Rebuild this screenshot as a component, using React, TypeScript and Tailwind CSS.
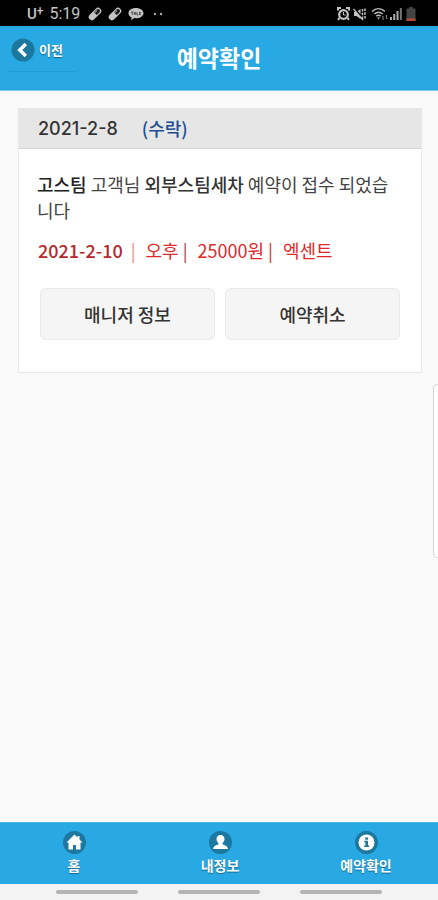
import type { ReactNode } from 'react'

type Tab = {
  label: string
  href: string
  icon: ReactNode
}

const tabs: Tab[] = [
  {
    label: '홈',
    href: '#home',
    icon: <path d="M11.500 3.500 3.500 11.500h2v7H10V14h3v4.500h4.500v-7h2l-3-3v-3.500h-2v1.500z" />,
  },
  {
    label: '내정보',
    href: '#me',
    icon: <path d="M11.500 4c-2.600 0-4 1.700-4 4.100 0 1.700.8 3.200 1.900 4v1.500c-2.500.7-5.100 1.700-5.400 4.400h15c-.3-2.700-2.900-3.700-5.400-4.400v-1.500c1.100-.8 1.900-2.300 1.900-4 0-2.400-1.400-4.100-4-4.100z" />,
  },
  {
    label: '예약확인',
    href: '#reservation',
    icon: (
      <>
        <circle cx="11.500" cy="11.500" r="8" />
        <path fill="#1c789f" d="M10.200 6.500h2.800v2.200h-2.800zM9.200 9.700H13v4.800h1.200V16H9.200v-1.500h1.200v-3.300H9.200z" />
      </>
    ),
  },
]

function Pill() {
  return (
    <svg viewBox="0 0 14 14" className="size-3.5">
      <g transform="rotate(-45 7 7)">
        <rect x="-.5" y="3.800" width="15" height="6.400" rx="3.200" fill="#c4c4c4" />
        <path d="M7.500 5h3.700a2 2 0 0 1 0 4H7.500z" fill="#1a1a1a" />
        <path d="M7.500 6h3.500" stroke="#999" strokeWidth="1" />
      </g>
    </svg>
  )
}

function StatusBar() {
  return (
    <div className="flex h-[26px] items-center justify-between bg-black pt-px pr-[22px] pl-[27px] font-['Roboto',sans-serif] text-[#c4c4c4]">
      <div className="flex items-center gap-1.5">
        <span className="flex items-center text-[15px] leading-4 font-medium">
          U<sup className="top-0 -mt-1.5 text-xs leading-3">+</sup>
        </span>
        <span className="mr-0.5 text-base leading-5">5:19</span>
        <Pill />
        <Pill />
        <svg viewBox="0 0 16 14" className="h-3.5 w-4" fill="#c4c4c4">
          <path d="M8 1C3.600 1 .5 3.200.5 6.200c0 2 1.200 3.500 3.200 4.400L3 13.200l3.300-2.100c.5.100 1.100.100 1.700.1 4.400 0 7.500-2.100 7.500-5S12.400 1 8 1z" />
          <path d="M3 5h2.500M4.200 5v3M6 8l1-3 1 3M9 5v3h1.200M11.500 4.800V8M13.200 5l-1.500 1.500L13.300 8" stroke="#333" strokeWidth=".8" fill="none" />
        </svg>
        <svg viewBox="0 0 12 4" className="ml-0.5 h-1 w-3" fill="#aaa">
          <circle cx="3" cy="2" r="1.200" />
          <circle cx="9" cy="2" r="1.200" />
        </svg>
      </div>
      <div className="flex items-center gap-[3px]">
        <svg viewBox="0 0 13 14" className="h-3.5 w-[13px]" fill="none" stroke="#c4c4c4">
          <path d="M1 3.500V1h3M9 1h3v2.500M2.500 11 1 12.800M10.500 11l1.500 1.800" strokeWidth="2" />
          <circle cx="6.500" cy="7.500" r="4.300" strokeWidth="2.200" />
          <path d="M6.500 5v3h2" />
        </svg>
        <svg viewBox="0 0 13 14" className="h-3.5 w-[13px]" fill="none" stroke="#c4c4c4">
          <path d="M1 5v4h2.500L7.500 12V2L3.500 5z" fill="#c4c4c4" stroke="none" />
          <path d="m1 1 10 12" stroke="#000" strokeWidth="2" />
          <path d="m.500 2 9.500 11" strokeWidth="1.200" />
          <path d="M9.500 2v10M12 1.500v11" strokeDasharray="2.500 1.200" strokeWidth="1.500" />
        </svg>
        <svg viewBox="0 0 17 14" className="ml-0.5 h-3.5 w-[17px]" fill="none" stroke="#bbb" strokeWidth="1.500">
          <path d="M1 4.500c4-3.600 9-3.600 13 0M3.300 7c2.600-2.200 5.800-2.200 8.400 0M5.300 9.200c1.300-1 3.100-1 4.400 0" />
          <path d="M6 10.500h3l-1.500 2z" fill="#bbb" stroke="none" />
          <path d="M12 9v4M15.500 8v4" stroke="#777" strokeWidth="1.200" />
        </svg>
        <svg viewBox="0 0 12 13" className="-ml-px h-[13px] w-3" fill="#aaa">
          <path d="M0 10h2v3H0zM3.200 7h2v6h-2zM6.500 4h2v9h-2z" />
          <path d="M9.800 1h2v12h-2z" fill="#777" />
        </svg>
        <svg viewBox="0 0 10 14" className="ml-px h-3.5 w-2.5">
          <path d="M3 0h4v1.500h2.500V14H.5V1.500H3z" fill="#444" />
          <path d="M.5 11.500h9V14h-9z" fill="#b64a35" />
        </svg>
      </div>
    </div>
  )
}

function Header() {
  return (
    <header className="grid h-[65px] grid-cols-[1fr_auto_1fr] items-start border-b border-[#7fc6ea] bg-[#29a9e3] px-[7px] pt-2 text-white">
      <button
        type="button"
        className="flex h-[38px] w-[72px] items-center gap-1 rounded-sm border-b border-[#239bd3] pb-1.5 pl-1 text-[13px] leading-5 font-bold whitespace-nowrap [text-shadow:0_1px_1px_#15668d]"
      >
        <svg viewBox="0 0 24 24" className="size-6 shrink-0">
          <circle cx="12" cy="12" r="11.500" fill="#1c789f" />
          <path d="m14.800 6-6 6 6 6" fill="none" stroke="#fff" strokeWidth="3.500" />
        </svg>
        이전
      </button>
      <h1 className="pt-[9px] text-[23px] leading-7 font-bold">예약확인</h1>
    </header>
  )
}

function Reservation() {
  return (
    <section className="mx-4 mt-[17px] ml-[18px] border border-[#e8e8e8] bg-white pb-8">
      <h2 className="flex h-10 items-center gap-6 border-b border-[#d6d6d6] bg-[#e6e6e6] px-[19px] text-[18px] font-medium">
        <span className="font-['Inter',sans-serif] text-[#333]">2021-2-8</span>
        <span className="text-[#204d91]">(수락)</span>
      </h2>
      <p className="px-[18px] pt-[22px] text-[18px] leading-[26px] break-all text-[#444]">
        <strong className="font-medium text-[#222]">고스팀</strong> 고객님{' '}
        <b className="font-medium text-[#333]">외부스팀세차</b> 예약이 접수 되었습니다
      </p>
      <p className="flex px-[19px] pt-[13px] text-[18px] leading-7 whitespace-pre text-[#e0292b]">
        <b className="font-medium text-[#b5282b]">2021-2-10</b>
        <span className="pl-2 text-[#ef8585]">|</span>
        <span className="pl-2.5">오후</span>
        <span className="pl-1 text-[#a83a3d]">|</span>
        <span className="pl-2.5">25000원</span>
        <span className="pl-1">|</span>
        <span className="pl-2.5">엑센트</span>
      </p>
      <div className="grid grid-cols-2 gap-2.5 px-[21px] pt-6 text-[18px] font-medium text-[#333]">
        <button type="button" className="h-[52px] rounded-md border border-[#e9e9e9] bg-[#f5f5f5]">
          매니저 정보
        </button>
        <button type="button" className="h-[52px] rounded-md border border-[#e9e9e9] bg-[#f5f5f5]">
          예약취소
        </button>
      </div>
    </section>
  )
}

export default function App() {
  return (
    <div className="relative flex min-h-screen flex-col bg-[#f9f9f9] font-['Noto_Sans_CJK_KR',sans-serif]">
      <StatusBar />
      <Header />
      <main className="flex-1">
        <Reservation />
      </main>
      <div className="absolute top-96 right-0 h-[174px] w-[5px] rounded-l-md border border-r-0 border-[#d5d5d5] bg-white" />
      <nav className="grid h-[62px] grid-cols-3 border-t border-[#4bb5e5] bg-[#29a9e3] text-white">
        {tabs.map((tab) => (
          <a
            key={tab.label}
            href={tab.href}
            className="flex flex-col items-center pt-2 pl-0.5 text-[14px] leading-[22px] font-bold [text-shadow:0_1px_1px_#15668d]"
          >
            <svg viewBox="0 0 23 23" className="size-[23px]" fill="#fff">
              <circle cx="11.500" cy="11.500" r="11.500" fill="#1c789f" />
              {tab.icon}
            </svg>
            {tab.label}
          </a>
        ))}
      </nav>
      <div className="flex h-4 items-center justify-center gap-10 bg-[#f3f3f3]">
        <span className="h-1 w-[82px] rounded-full bg-[#b4b4b4]" />
        <span className="h-1 w-[82px] rounded-full bg-[#b4b4b4]" />
        <span className="h-1 w-[82px] rounded-full bg-[#b4b4b4]" />
      </div>
    </div>
  )
}
